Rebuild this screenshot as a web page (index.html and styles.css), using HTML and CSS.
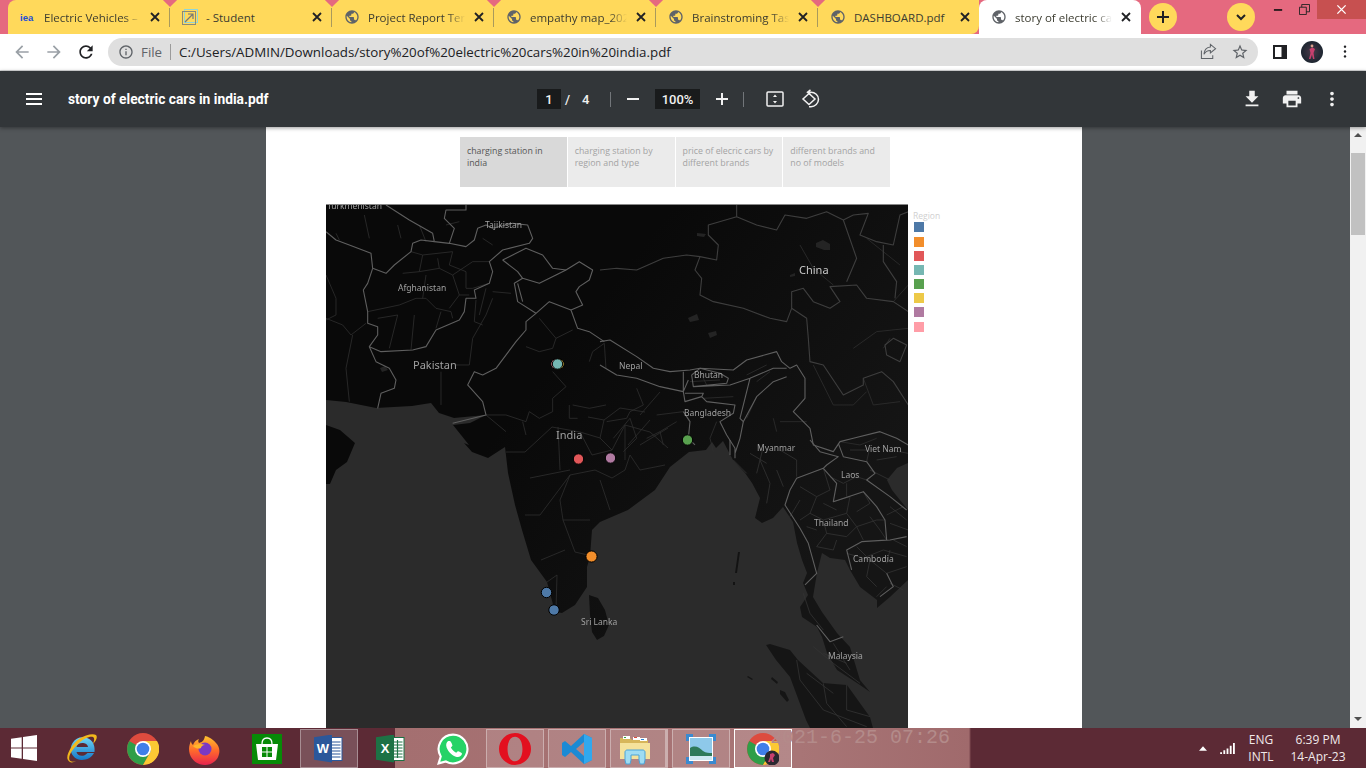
FILE: index.html
```html
<!DOCTYPE html>
<html lang="en">
<head>
<meta charset="utf-8">
<title>story of electric cars in india.pdf</title>
<link rel="stylesheet" href="styles.css">
</head>
<body>
<svg class="defs" width="0" height="0" aria-hidden="true">
  <symbol id="globe" viewBox="0 0 24 24"><path d="M12 2C6.48 2 2 6.48 2 12s4.48 10 10 10 10-4.48 10-10S17.52 2 12 2zm-1 17.93c-3.95-.49-7-3.85-7-7.93 0-.62.08-1.21.21-1.79L9 15v1c0 1.1.9 2 2 2v1.93zm6.9-2.54c-.26-.81-1-1.39-1.9-1.39h-1v-3c0-.55-.45-1-1-1H8v-2h2c.55 0 1-.45 1-1V7h2c1.1 0 2-.9 2-2v-.41c2.93 1.19 5 4.06 5 7.41 0 2.08-.8 3.97-2.1 5.39z"/></symbol>
  <symbol id="x" viewBox="0 0 12 12"><path d="M2 2l8 8M10 2l-8 8" fill="none" stroke="currentColor" stroke-width="1.8"/></symbol>
</svg>
<div class="app">
  <header class="tabstrip">
    <div class="tabs">
      <div class="tab">
        <svg class="favicon" viewBox="0 0 16 16"><text x="0" y="11.5" class="iea">iea</text></svg>
        <span class="tab-title">Electric Vehicles –</span>
        <svg class="tab-x"><use href="#x"/></svg>
      </div>
      <div class="tab">
        <svg class="favicon" viewBox="0 0 16 16"><rect x="2.5" y=".5" width="13" height="13" fill="none" stroke="#8fd5d8"/><rect x=".5" y="2.5" width="13" height="13" fill="none" stroke="#8a8a7a"/><path d="M3 13l8-8M6 5h5v5" fill="none" stroke="#777" stroke-width="1.2"/></svg>
        <span class="tab-title tab-title-full">- Student</span>
        <svg class="tab-x"><use href="#x"/></svg>
      </div>
      <div class="tab">
        <svg class="favicon globe"><use href="#globe"/></svg>
        <span class="tab-title">Project Report Ten</span>
        <svg class="tab-x"><use href="#x"/></svg>
      </div>
      <div class="tab">
        <svg class="favicon globe"><use href="#globe"/></svg>
        <span class="tab-title">empathy map_202</span>
        <svg class="tab-x"><use href="#x"/></svg>
      </div>
      <div class="tab">
        <svg class="favicon globe"><use href="#globe"/></svg>
        <span class="tab-title">Brainstroming Task</span>
        <svg class="tab-x"><use href="#x"/></svg>
      </div>
      <div class="tab tab-sixth">
        <svg class="favicon globe"><use href="#globe"/></svg>
        <span class="tab-title tab-title-full">DASHBOARD.pdf</span>
        <svg class="tab-x"><use href="#x"/></svg>
      </div>
      <div class="tab tab-active">
        <svg class="favicon globe"><use href="#globe"/></svg>
        <span class="tab-title">story of electric ca</span>
        <svg class="tab-x"><use href="#x"/></svg>
      </div>
    </div>
    <button class="round-btn new-tab"><svg viewBox="0 0 16 16"><path d="M8 2v12M2 8h12" stroke="#202124" stroke-width="2"/></svg></button>
    <button class="round-btn tab-search"><svg viewBox="0 0 16 16"><path d="M4 6l4 4 4-4" fill="none" stroke="#202124" stroke-width="2"/></svg></button>
    <div class="win-controls">
      <div class="win-btn"><svg viewBox="0 0 12 12"><path d="M1 6.500h9" stroke="#111" stroke-width="1.800"/></svg></div>
      <div class="win-btn"><svg viewBox="0 0 12 12"><path d="M.5 3.500h7.500v8H.5zM3 3.500V.5h8.500v8H8" fill="none" stroke="#222"/></svg></div>
      <div class="win-btn win-close"><svg viewBox="0 0 12 12"><path d="M1.500 1.500l9 9M10.500 1.500l-9 9" stroke="#fff" stroke-width="1.500"/></svg></div>
    </div>
  </header>

  <nav class="toolbar">
    <svg class="nav-icon dim" viewBox="0 0 24 24"><path d="M20 11H7.830l5.590-5.590L12 4l-8 8 8 8 1.410-1.410L7.830 13H20v-2z"/></svg>
    <svg class="nav-icon dim" viewBox="0 0 24 24"><path d="M12 4l-1.410 1.410L16.170 11H4v2h12.170l-5.580 5.590L12 20l8-8z"/></svg>
    <svg class="nav-icon" viewBox="0 0 24 24"><path d="M17.650 6.350C16.200 4.900 14.210 4 12 4c-4.420 0-7.990 3.580-7.990 8s3.570 8 7.990 8c3.730 0 6.840-2.550 7.730-6h-2.080c-.82 2.330-3.040 4-5.650 4-3.310 0-6-2.690-6-6s2.690-6 6-6c1.660 0 3.140.69 4.220 1.780L13 11h7V4l-2.350 2.350z"/></svg>
    <div class="omnibox">
      <svg class="info" viewBox="0 0 24 24"><path d="M11 7h2v2h-2zm0 4h2v6h-2zm1-9C6.480 2 2 6.480 2 12s4.480 10 10 10 10-4.480 10-10S17.520 2 12 2zm0 18c-4.410 0-8-3.590-8-8s3.590-8 8-8 8 3.590 8 8-3.590 8-8 8z"/></svg>
      <span class="scheme">File</span>
      <span class="omni-sep"></span>
      <span class="url">C:/Users/ADMIN/Downloads/story%20of%20electric%20cars%20in%20india.pdf</span>
      <svg class="omni-icon share" viewBox="0 0 18 18"><path d="M11 1.500l5.500 4.500-5.500 4.500V8C7.500 8 5.500 9.500 4.200 12 4.500 7.500 7 4.500 11 4.200zM1.500 8v8.500h12V13" fill="none" stroke="#5f6368" stroke-width="1.100"/></svg>
      <svg class="omni-icon star" viewBox="0 0 24 24"><path d="M22 9.240l-7.190-.62L12 2 9.190 8.630 2 9.240l5.460 4.730L5.820 21 12 17.270 18.180 21l-1.630-7.030L22 9.240zM12 15.400l-3.760 2.270 1-4.280-3.320-2.880 4.380-.38L12 6.100l1.710 4.040 4.380.38-3.320 2.880 1 4.280L12 15.400z"/></svg>
    </div>
    <svg class="side-panel" viewBox="0 0 14 14"><path d="M0 0h14v14H0zM2 2v10h6.500V2z" fill="#202124" fill-rule="evenodd"/></svg>
    <svg class="avatar" viewBox="0 0 22 22"><defs><radialGradient id="av"><stop offset="0" stop-color="#4a3a4a"/><stop offset="1" stop-color="#1c2530"/></radialGradient></defs><circle cx="11" cy="11" r="11" fill="url(#av)"/><path d="M8.500 8l3-1.500 2.500 1.500-1.500 4 1 6h-1.500l-1-4.500-1.500 4.500H8l1.500-6z" fill="#c8406e"/><circle cx="11" cy="5" r="1.400" fill="#d9a28c"/></svg>
    <svg class="kebab" viewBox="0 0 4 16"><circle cx="2" cy="2" r="1.500"/><circle cx="2" cy="8" r="1.500"/><circle cx="2" cy="14" r="1.500"/></svg>
  </nav>

  <section class="pdf-toolbar">
    <div class="pdf-left">
      <svg class="menu-icon" viewBox="0 0 16 12"><path d="M0 1h16M0 6h16M0 11h16" stroke="#fff" stroke-width="2"/></svg>
      <span class="pdf-title">story of electric cars in india.pdf</span>
    </div>
    <div class="pdf-center">
      <span class="page-box">1</span>
      <span class="page-slash">/</span>
      <span class="page-count">4</span>
      <span class="pdf-sep"></span>
      <svg class="zoom-icon" viewBox="0 0 14 14"><path d="M1 7h12" stroke="#f1f1f1" stroke-width="2"/></svg>
      <span class="zoom-box">100%</span>
      <svg class="zoom-icon" viewBox="0 0 14 14"><path d="M1 7h12M7 1v12" stroke="#f1f1f1" stroke-width="2"/></svg>
      <span class="pdf-sep pdf-sep-b"></span>
      <svg class="fit-icon" viewBox="0 0 18 16"><rect x="1" y="1" width="16" height="14" rx="1" fill="none" stroke="#f1f1f1" stroke-width="1.500"/><path d="M9 3.500l2 2.500H7zM9 12.500l2-2.500H7z" fill="#f1f1f1"/></svg>
      <svg class="rotate-icon" viewBox="0 0 20 20"><path d="M8 4.500l-6 5.500 6 5.500 6-5.500z" fill="none" stroke="#f1f1f1" stroke-width="1.500"/><path d="M9.500 0.800l-3 2.400 3 2.400M7 3.200h3c4 0 7.500 3 7.500 7s-3.500 7.500-7.500 7.500H8" fill="none" stroke="#f1f1f1" stroke-width="1.500"/></svg>
    </div>
    <div class="pdf-right">
      <svg class="pdf-action" viewBox="0 0 24 24"><path d="M19 9h-4V3H9v6H5l7 7 7-7zM5 18v2h14v-2H5z"/></svg>
      <svg class="pdf-action" viewBox="0 0 24 24"><path d="M19 8H5c-1.660 0-3 1.340-3 3v6h4v4h12v-4h4v-6c0-1.660-1.340-3-3-3zm-3 11H8v-5h8v5zm3-7c-.55 0-1-.45-1-1s.45-1 1-1 1 .45 1 1-.45 1-1 1zm-1-9H6v4h12V3z"/></svg>
      <svg class="pdf-action" viewBox="0 0 24 24"><path d="M12 8c1.100 0 2-.9 2-2s-.9-2-2-2-2 .9-2 2 .9 2 2 2zm0 2c-1.100 0-2 .9-2 2s.9 2 2 2 2-.9 2-2-.9-2-2-2zm0 6c-1.100 0-2 .9-2 2s.9 2 2 2 2-.9 2-2-.9-2-2-2z"/></svg>
    </div>
  </section>

  <main class="viewer">
    <div class="viewer-scroll">
      <article class="page">
        <div class="story-tabs">
          <div class="story-tab story-tab-active">charging station in india</div>
          <div class="story-tab">charging station by region and type</div>
          <div class="story-tab">price of elecric cars by different brands</div>
          <div class="story-tab">different brands and no of models</div>
        </div>
        <div class="story-body">
          <svg class="map" viewBox="326 205 582 523" preserveAspectRatio="none">
            <defs>
              <linearGradient id="landglow" gradientUnits="userSpaceOnUse" x1="600" y1="300" x2="860" y2="500"><stop offset="0" stop-color="#090909"/><stop offset="1" stop-color="#151515"/></linearGradient>
            </defs>
            <rect class="water" x="326" y="205" width="582" height="523"/>
            <g class="land">
              <path d="M326 205H908V463L897 468 887 480 892 490 908 510V580L890 597 877 608 877 600 860 587 850 570 845 560 830 558 822 553 817 573 813 597 822 612 837 633 850 647 860 680 870 692 857 683 837 670 827 653 822 637 817 627 802 617 800 607 808 595 803 583 807 573 802 560 797 543 793 522 783 507 773 518 762 523 755 518 760 498 752 483 745 473 733 460 723 441 716 448 712 442 706 450 689 452 670 467 655 490 628 510 600 522 592 530 590 557 587 567 587 587 575 605 562 613 555 612 547 582 531 560 522 530 515 505 508 473 505 447 488 458 472 452 464 443 469 445 461 435 453 425 470 423 486 415 454 418 439 413 431 403 412 406 376 408 346 402 326 400Z"/>
              <path d="M326 425L340 430 355 443 347 462 336 470 330 484 326 484Z"/>
              <path d="M589 595L598 598 605 610 609 625 604 636 597 640 592 632 590 615Z"/>
              <path d="M766 645L770 644 790 650 798 660 823 683 847 685 870 717 873 728H810L806 720 790 677 776 660Z"/>
              <path d="M738 552L740 552 737 573 735 573ZM733 582h2v3h-2zM748 676l5 3-1 1-5-3zM772 677l6 5-1 2-6-5zM780 690l5 2 4 8-2 2-7-8z"/>
            </g>
            <g class="lakes">
              <path d="M816 243l7-3 7 4 0 6-6 0-8-3zM688 318l9-4 2 6-9 2zM708 333l8-2 1 4-7 3zM790 275l5-2 0 3-5 1zM697 233l9 1-2 3-7-1zM380 368l5-2 3 4-6 2z"/>
            </g>
            <g class="minor" transform="translate(326 205) scale(.3333)">
              <path d="M255 140L290 150 380 140 370 180 420 200 420 250 440 250M290 150L280 200 340 190 380 210 400 270 430 270M300 210L290 280M340 190L335 160M380 210L440 170 490 170M230 205L280 200M490 235L440 250M400 270L370 310M450 285L445 350 470 360M480 250L460 330M500 260L555 265"/>
              <path d="M125 320L220 300 270 280 300 280 330 310 375 320 380 340M155 340L215 330 190 430M265 330L255 435M345 320L330 370M345 500L345 600M390 480L430 480 440 400 480 330 500 280M0 340L50 360 75 390 120 355M80 390L60 490 70 590M0 210L30 280 30 330 0 345M115 30L130 100M30 85L40 105M225 100L215 60M360 60L400 50M500 120L470 100M300 110L280 60"/>
              <path d="M600 425L640 440 680 430 690 400 640 340M690 400L740 375M680 500L720 545 680 580 680 620 640 640 610 620 600 650 540 630 480 630M790 470L800 440 835 415 840 490M740 600L790 610 840 600M730 600L730 640 755 640M600 690L590 650M480 630L540 680"/>
            </g>
            <g class="minor">
              <path d="M588 417L604 420 620 408 645 412M604 420L600 438 580 432 552 427 525 452 506 452M580 432L592 455 612 450 625 425 650 432 668 448M600 438L612 450M612 478L625 470 630 455 640 470 665 465M612 478L595 470 570 475 540 515 525 515M570 475L560 500 563 520 590 520M610 510L600 480M563 520L575 552 592 556M541 560L565 550M547 582L557 575 556 610M640 415L660 392M668 428L640 445M625 425L625 460M530 478L570 470M558 427L560 470M628 445L650 420"/>
            </g>
            <g class="minor" transform="translate(600 205) scale(.3333)">
              <path d="M110 550L130 600 90 620 80 640 20 650M170 630L250 620M180 680L230 650M40 700L90 640 110 700 70 740M140 700L180 680 190 720M310 580L400 575M350 650L330 700 340 740M440 640L470 575M520 640L530 680M540 650L620 650M640 480L700 600 760 600 800 560M790 520L820 600 900 590M720 710L780 720 830 700M850 430L870 400M760 430L830 380 925 370M600 120L640 190 700 240M800 100L900 180M880 290L925 240"/>
              <path d="M440 510L500 480M470 530L510 500M270 530L360 525M300 500L320 540"/>
            </g>
            <g class="minor mesh" transform="translate(690 440) scale(.3333)">
              <path d="M330 140L380 170 360 220 330 240M380 170L420 150 400 85M360 220L400 240 410 280 380 320M400 240L470 220 500 260 470 290 410 280M470 220L480 170 430 185M500 260L560 240 585 240M500 260L520 300M380 320L430 330 440 300M330 180L300 230M350 260L380 270M400 190L440 210M420 110L460 130 500 110 530 120M470 130L470 170M520 155L540 190M540 190L500 215M540 230L570 270 590 300M470 340L540 360 590 400M500 320L530 350 580 330 650 350M540 360L530 410 560 440M590 400L650 380M600 330L590 370M610 300L650 320M600 250L655 270M600 200L650 240M590 225L640 200M540 90L600 120M560 60L620 50M480 30L530 30M530 65L540 20M600 30L655 40M640 450L600 430M560 470L590 440M210 60L240 130 230 190M130 60L170 100M260 90L280 140M270 30L320 60 320 110M220 20L200 100M180 40L230 70"/>
              <path d="M340 460L360 520 400 570M370 620L430 670 510 730M400 640L470 670M430 610L480 690M320 660L330 720 400 810 530 860M400 730L410 790 470 860M350 700L430 760M470 735L470 810 540 830"/>
            </g>
            <g class="major" transform="translate(326 205) scale(.3333)">
              <path d="M180 0L250 45 320 85 325 110 285 105 260 115 255 140 205 180 180 205 140 190 135 145 70 120 30 105 0 80"/>
              <path d="M140 190L125 235 112 255 125 320 125 355 155 365 155 390 130 425 150 470 190 490 210 525 205 550 165 565 155 610"/>
              <path d="M130 425L165 440 260 435 300 425 330 375 365 360 400 345 415 320 420 280 450 280 445 255 490 235 500 200 490 170 530 135 610 115 620 100 605 60 560 55 500 70 480 60 455 70 445 105 420 125 370 115 385 70 355 40 360 15 420 15 420 0M325 110L370 115"/>
              <path d="M530 165L600 130 650 150 680 190 720 195 760 170 800 195 790 225 760 245 750 260 770 300 735 315 755 370 790 380 835 410"/>
              <path d="M530 165L575 200 590 220 565 235 575 290 630 325 670 290 735 315M720 195L690 210 640 235 590 220M575 235L590 290"/>
              <path d="M630 325L600 350 600 375 570 410 510 490 470 510 445 500 425 540 470 590 480 630 380 655"/>
            </g>
            <g class="major" transform="translate(600 205) scale(.3333)">
              <path d="M0 410L30 405 110 455 160 490 210 500 270 495 300 490 400 495 440 465 530 440 545 470 570 490 590 480 615 520 615 580 580 620 630 670 640 720 700 740 720 710 760 700 840 680 890 700 925 720"/>
              <path d="M0 480L50 510 110 520 180 545 250 560 250 500M250 560L265 525M275 510L300 490 360 505 385 520 380 535 280 545 275 510M280 545L390 540 450 520 520 490 560 490M450 520L420 640 430 650 470 575 520 530 560 515"/>
              <path d="M250 560L255 590 305 575 310 565 255 565M305 575L320 590 405 600 400 625 360 650 380 690 405 730 405 760M250 620L270 650 265 700 285 720M430 650L420 700 405 745"/>
            </g>
            <g class="major major-dim" transform="translate(600 205) scale(.3333)">
              <path d="M0 195L50 190 110 195 190 160 260 150 300 155 350 165 355 120 325 90 325 60 410 35 470 60 530 75 555 30 620 40 680 20 730 45 760 30 805 25 780 90 830 110 880 120 900 30 925 20M410 0L410 35"/>
              <path d="M300 155L285 195 305 220 300 270 340 290 430 310 510 340 560 350 575 310 620 340 625 400 630 470 670 480 730 570 790 540 790 520 845 500 880 530 925 600"/>
              <path d="M575 310L575 260 610 250 640 290 690 310 720 290 690 245 770 240 800 280 880 290 925 320M730 45L770 160 740 230M850 120L850 170 890 230 885 280M855 420L880 400 920 420 900 470 860 450Z"/>
            </g>
            <g class="major" transform="translate(690 440) scale(.3333)">
              <path d="M360 0L390 35 445 50 410 75 400 85 320 115 300 150 285 195 330 265 355 310 380 400 345 435"/>
              <path d="M445 10L460 50 530 65 555 100 530 120 600 170 650 210M400 85L440 130 430 185 520 155 560 200 585 240 590 300 515 305 470 330 485 390M515 305L600 300 650 290M590 400L610 440 570 470M380 555L420 605 460 590M120 0L120 45"/>
            </g>
            <g class="labels">
              <text x="327" y="209" class="lb-s">Turkmenistan</text>
              <text x="485" y="228" class="lb-s">Tajikistan</text>
              <text x="398" y="291" class="lb-s">Afghanistan</text>
              <text x="799" y="274" class="lb-l">China</text>
              <text x="413" y="369" class="lb-m">Pakistan</text>
              <text x="619" y="369" class="lb-s">Nepal</text>
              <text x="694" y="378" class="lb-s">Bhutan</text>
              <text x="684" y="416" class="lb-s">Bangladesh</text>
              <text x="556" y="439" class="lb-m">India</text>
              <text x="757" y="451" class="lb-s">Myanmar</text>
              <text x="865" y="452" class="lb-s">Viet Nam</text>
              <text x="841" y="478" class="lb-s">Laos</text>
              <text x="814" y="526" class="lb-s">Thailand</text>
              <text x="853" y="562" class="lb-s">Cambodia</text>
              <text x="581" y="625" class="lb-s">Sri Lanka</text>
              <text x="828" y="659" class="lb-s">Malaysia</text>
            </g>
            <g class="points">
              <circle cx="556" cy="364" r="5.200" fill="#ff9da7"/>
              <circle cx="559" cy="364" r="5.200" fill="#edc948"/>
              <circle cx="557.500" cy="364" r="5.200" fill="#76b7b2"/>
              <circle cx="578.500" cy="459" r="5.200" fill="#e15759"/>
              <circle cx="610.500" cy="458" r="5.200" fill="#b07aa1"/>
              <circle cx="687.500" cy="440" r="5.200" fill="#59a14f"/>
              <circle cx="591.500" cy="556.500" r="5.600" fill="#f28e2b"/>
              <circle cx="546.500" cy="592.500" r="5.200" fill="#4e79a7"/>
              <circle cx="554" cy="610" r="5.200" fill="#4e79a7"/>
            </g>
          </svg>
          <aside class="legend">
            <div class="legend-title">Region</div>
            <span class="swatch sw-blue"></span>
            <span class="swatch sw-orange"></span>
            <span class="swatch sw-red"></span>
            <span class="swatch sw-teal"></span>
            <span class="swatch sw-green"></span>
            <span class="swatch sw-yellow"></span>
            <span class="swatch sw-purple"></span>
            <span class="swatch sw-pink"></span>
          </aside>
        </div>
      </article>
    </div>
    <div class="scrollbar">
      <svg class="sb-arrow" viewBox="0 0 8 4"><path d="M0 4l4-4 4 4z"/></svg>
      <div class="sb-thumb"></div>
      <svg class="sb-arrow sb-down" viewBox="0 0 8 4"><path d="M0 0l4 4 4-4z"/></svg>
    </div>
  </main>

  <footer class="taskbar">
    <div class="tb-start"><svg viewBox="0 0 26 26"><path d="M0 3.700L10.700 2.200V12.400H0zM12 2L26 0V12.400H12zM0 13.600H10.700V23.800L0 22.300zM12 13.600H26V26L12 24z" fill="#fff"/></svg></div>
    <div class="tb-item">
      <svg class="tb-icon" viewBox="0 0 32 32"><defs><linearGradient id="ie" x1="0" y1="0" x2="0" y2="1"><stop offset="0" stop-color="#6fd5f5"/><stop offset="1" stop-color="#1577c9"/></linearGradient></defs><path d="M29.500 19H11.500c.5 3.500 6.500 6 11 1H29c-3 6-11 8.500-17 6-6-3-8-10-4.500-16C11 4 19 2.500 25 6.500c4 3 5 8 4.500 12.500zM11.500 14h11.500c-.5-5-10.500-5.500-11.500 0z" fill="url(#ie)"/><path d="M3 27C0 23 7 11 14 6c6-4 14-6 17-4 2 2 0 6-3 9 1-3 2-6 0-7-3-1-9 1-15 7S3 23 4.500 27c1 2 4 2 7 1-4 2-7 2-8.500-1z" fill="#f2b81c"/></svg>
    </div>
    <div class="tb-item">
      <svg class="tb-icon" viewBox="0 0 32 32"><circle cx="16" cy="16" r="16" fill="#dd4b3e"/><path d="M16 16L2.200 8A16 16 0 0 0 16 32l8-14z" fill="#2f9e48"/><path d="M16 8h14a16 16 0 0 1-14 24l8-14z" fill="#fcc934"/><circle cx="16" cy="16" r="8" fill="#fff"/><circle cx="16" cy="16" r="6.300" fill="#3f7fe8"/></svg>
    </div>
    <div class="tb-item">
      <svg class="tb-icon" viewBox="0 0 32 32"><defs><linearGradient id="ff" x1="0" y1="0" x2="0" y2="1"><stop offset="0" stop-color="#ffc32e"/><stop offset=".5" stop-color="#ff6a2b"/><stop offset="1" stop-color="#e8234f"/></linearGradient></defs><path d="M16 32C7 32 0 25 0 16c0-3 1-6 2-8 0 2 1 3 2 4 1-3 3-5 6-6-1 1-1 3 0 4 3-1 5-2 6-7 2 0 8 3 11 7 3 3 4 7 3 11-1 6-7 11-14 11z" fill="url(#ff)"/><circle cx="16" cy="16" r="6.500" fill="#7a39c4"/><path d="M4 13c3-2 8-3 12-1-3 0-4 2-4 3-2 1-5 1-8-2z" fill="#ffb62b"/></svg>
    </div>
    <div class="tb-item">
      <svg class="tb-icon store" viewBox="0 0 30 30"><rect width="30" height="30" fill="#078a07"/><path d="M10 10c0-4 2-6 5-6s5 2 5 6" fill="none" stroke="#fff" stroke-width="1.300"/><path d="M4 10h22l-2 16H6z" fill="#fff"/><path d="M10 13h4.500v4.500H10zM15.500 13H20v4.500h-4.500zM10 18.500h4.500V23H10zM15.500 18.500H20V23h-4.500z" fill="#078a07"/></svg>
    </div>
    <div class="tb-item tb-word">
      <div class="office-icon">
        <svg class="office-doc" viewBox="0 0 14 24"><rect x=".5" y=".5" width="13" height="23" fill="#fff" stroke="#2b579a"/><path d="M3 5h9M3 8h9M3 11h9M3 14h9M3 17h9M3 20h9" stroke="#2b579a" stroke-width="1.200"/></svg>
        <span class="office-letter word-letter">W</span>
      </div>
    </div>
    <div class="tb-item">
      <div class="office-icon">
        <svg class="office-doc" viewBox="0 0 14 24"><rect x=".5" y=".5" width="13" height="23" fill="#fff" stroke="#1d7245"/><path d="M3 5h9M3 8h9M3 11h9M3 14h9M3 17h9M3 20h9M7 3v18" stroke="#1d7245" stroke-width="1.200"/></svg>
        <span class="office-letter excel-letter">X</span>
      </div>
    </div>
    <div class="tb-item">
      <svg class="tb-icon" viewBox="0 0 30 30"><path d="M15 1.500A13.500 13.500 0 0 0 3.500 22L1.500 28.500 8.300 26.700A13.500 13.500 0 1 0 15 1.500z" fill="#25d366" stroke="#fff" stroke-width="2"/><path d="M10.500 7.500c-1.500 1-2.500 3-1.500 6 1.500 4 5.500 8 9.500 9 2.500.5 4.500-1 5-3 0-1-3-2.500-4-2.500l-1.500 1.500c-2-1-4-3-5-5l1.500-1.500c0-1-1.500-4.500-2.500-4.500z" fill="#fff"/></svg>
    </div>
    <div class="tb-item tb-open">
      <svg class="tb-icon" viewBox="0 0 30 30"><path d="M15 0a15 15 0 1 0 0 30 15 15 0 0 0 0-30zm0 3.500c4.500 0 7 5 7 11.500s-2.500 11.500-7 11.500S8 21.500 8 15 10.500 3.500 15 3.500z" fill="#e3101f" fill-rule="evenodd"/></svg>
    </div>
    <div class="tb-item tb-open">
      <svg class="tb-icon" viewBox="0 0 32 32"><path d="M23 1l8 4v22l-8 4-13-12-6 5-3-2v-12l3-2 6 5zM23 9l-8 7 8 7z" fill="#1a8ad4" fill-rule="evenodd"/><path d="M23 1l8 4v22l-8 4z" fill="#31a8ee"/></svg>
    </div>
    <div class="tb-item tb-open tb-stack">
      <svg class="tb-icon folder" viewBox="0 0 32 32"><path d="M1 5h10l2 2h16v4H1z" fill="#d7b65a"/><path d="M4 3h7v3H4zM14 4h7v3h-7zM21 5h7v3h-7z" fill="#fff"/><rect x="5" y="4" width="2" height="1" fill="#35a33d"/><rect x="15" y="4" width="3" height="1" fill="#e04a3c"/><rect x="22" y="6" width="3" height="1" fill="#2a86d8"/><path d="M1 10h30v16H1z" fill="#f5e29b"/><path d="M6 27V19c0-1 1-2 2-2h16c1 0 2 1 2 2v8l-1 4h-4l-1-4v-5H12v5l-1 4H7z" fill="#9fdcf2" stroke="#4aa3d8"/></svg>
    </div>
    <div class="tb-item tb-open">
      <svg class="tb-icon" viewBox="0 0 32 32"><path d="M1 1h7v3H4v4H1zM24 1h7v7h-3V4h-4zM1 24h3v4h4v3H1zM28 24h3v7h-7v-3h4z" fill="#3a8ad0"/><rect x="4" y="4" width="24" height="24" fill="#fff"/><rect x="5" y="5" width="22" height="22" fill="#8ec9ea"/><path d="M5 15c5-3 9-1 13 3 3 2 6 2 9 2v7H5z" fill="#2f7a5a"/><path d="M5 23h22v4H5z" fill="#cfe8f2"/></svg>
    </div>
    <div class="tb-item tb-open tb-active">
      <svg class="tb-icon" viewBox="0 0 32 32"><circle cx="16" cy="16" r="16" fill="#dd4b3e"/><path d="M16 16L2.200 8A16 16 0 0 0 16 32l8-14z" fill="#2f9e48"/><path d="M16 8h14a16 16 0 0 1-14 24l8-14z" fill="#fcc934"/><circle cx="16" cy="16" r="8" fill="#fff"/><circle cx="16" cy="16" r="6.300" fill="#3f7fe8"/><circle cx="25" cy="25" r="7.500" fill="#2a2830"/><path d="M23 21l3-1 2 2-2 3 1 4h-2l-1-3-1 3h-2l2-5z" fill="#c8406e"/></svg>
    </div>
    <span class="wall-stamp">2021-6-25 07:26</span>
    <div class="tray">
      <svg class="tray-up" viewBox="0 0 9 5"><path d="M0 5l4.500-5 4.500 5z" fill="#fff"/></svg>
      <svg class="tray-signal" viewBox="0 0 16 12"><path d="M0 10h2v2H0zM3.500 8h2v4h-2zM7 6h2v6H7zM10.500 3h2v9h-2zM14 0h2v12h-2z" fill="#fff"/></svg>
      <div class="tray-text tray-lang"><span>ENG</span><span>INTL</span></div>
      <div class="tray-text tray-clock"><span>6:39 PM</span><span>14-Apr-23</span></div>
    </div>
  </footer>
</div>
</body>
</html>
```

FILE: styles.css
```css
* { box-sizing: border-box; }
html, body { margin: 0; padding: 0; height: 100%; overflow: hidden; }
body { font-family: "Open Sans", "Noto Sans", sans-serif; }
.defs { position: absolute; }
.app { width: 1366px; height: 768px; display: flex; flex-direction: column; overflow: hidden; }

/* tab strip */
.tabstrip { height: 34px; background: #e5697f; display: flex; align-items: flex-start; flex: none; }
.tabs { display: flex; margin-left: 8px; width: 1133px; height: 34px; flex: none; }
.tab { width: 162px; height: 34px; flex: none; background: #ffd95b; display: flex; align-items: center; padding-left: 12px; position: relative; font-size: 11.5px; color: #3c3c30; }
.tab:first-child { border-radius: 8px 0 0 0; }
.tab::after { content: ""; position: absolute; right: 0; top: 8px; height: 19px; width: 1px; background: #a99a5c; }
.tab::before { content: ""; position: absolute; right: -5px; top: -5px; width: 10px; height: 10px; background: #e5697f; transform: rotate(45deg); z-index: 1; }
.tab-sixth { width: 161px; border-radius: 0 0 8px 0; }
.tab-sixth::after, .tab-sixth::before, .tab-active::after, .tab-active::before { display: none; }
.tab-active { background: #fff; border-radius: 8px 8px 0 0; }
.favicon { width: 16px; height: 16px; flex: none; }
.globe { fill: #5f6368; }
.iea { font: bold 9.5px "Liberation Sans", sans-serif; fill: #1b4fd8; }
.tab-title { margin-left: 8px; width: 97px; flex: none; white-space: nowrap; -webkit-mask-image: linear-gradient(to right, #000 82%, transparent 100%); mask-image: linear-gradient(to right, #000 82%, transparent 100%); }
.tab-title-full { -webkit-mask-image: none; mask-image: none; }
.tab-x { width: 12px; height: 12px; margin-left: 8px; flex: none; color: #202124; }
.round-btn { border: 0; padding: 0; border-radius: 50%; background: #ffd95b; display: flex; align-items: center; justify-content: center; width: 28px; height: 28px; margin-top: 3px; flex: none; }
.round-btn svg { width: 16px; height: 16px; }
.new-tab { margin-left: 8px; }
.tab-search { margin-left: 50px; }
.win-controls { display: flex; margin-left: 10px; }
.win-btn { width: 26px; height: 19px; display: flex; align-items: center; justify-content: center; }
.win-btn svg { width: 11px; height: 11px; }
.win-close { width: 49px; background: #c75050; }

/* browser toolbar */
.toolbar { height: 37px; flex: none; background: #fff; display: flex; align-items: center; padding: 0 0 1px 12px; border-bottom: 1px solid #d9dadb; }
.nav-icon { width: 20px; height: 20px; margin-right: 12px; fill: #202124; flex: none; }
.dim { fill: #9aa0a6; }
.omnibox { width: 1150px; height: 28px; background: #dfdfdf; border-radius: 14px; display: flex; align-items: center; padding-left: 10px; font-size: 13.33px; color: #202124; flex: none; }
.info { width: 16px; height: 16px; fill: #5f6368; flex: none; margin-right: 7px; }
.scheme { color: #5f6368; }
.omni-sep { width: 1px; height: 16px; background: #9b9b9b; margin: 0 8px; }
.url { white-space: nowrap; }
.omni-icon { width: 17px; height: 17px; flex: none; }
.share { margin-left: auto; }
.star { width: 18px; height: 18px; margin: 0 9px 0 14px; fill: #5f6368; }
.side-panel { width: 14px; height: 14px; margin-left: 15px; flex: none; }
.avatar { width: 22px; height: 22px; margin-left: 14px; flex: none; }
.kebab { width: 4px; height: 13px; margin-left: 20px; fill: #202124; flex: none; }

/* pdf toolbar */
.pdf-toolbar { height: 56px; flex: none; background: #323639; color: #f1f1f1; display: flex; align-items: center; padding-left: 26px; position: relative; z-index: 2; box-shadow: 0 1px 4px rgba(0,0,0,.4); }
.pdf-left { width: 511px; display: flex; align-items: center; flex: none; }
.menu-icon { width: 16px; height: 12px; flex: none; }
.pdf-title { margin-left: 26px; font: 700 13.8px Roboto, sans-serif; color: #fff; white-space: nowrap; }
.pdf-center { display: flex; align-items: center; font: 500 13px Roboto, sans-serif; flex: none; }
.page-box { width: 24px; height: 20px; background: #191b1c; display: flex; align-items: center; justify-content: center; }
.page-slash { margin-left: 4px; width: 17px; }
.page-count { width: 10px; }
.pdf-sep { width: 1px; height: 15px; background: #72767a; margin-left: 18px; }
.zoom-icon { width: 14px; height: 14px; flex: none; }
.pdf-sep + .zoom-icon { margin-left: 15px; }
.zoom-box { width: 45px; height: 20px; margin: 0 15px; background: #191b1c; display: flex; align-items: center; justify-content: center; }
.pdf-sep-b { margin-left: 14px; }
.fit-icon { width: 18px; height: 16px; margin-left: 22px; flex: none; }
.rotate-icon { width: 20px; height: 20px; margin-left: 17px; flex: none; }
.pdf-right { margin-left: auto; display: flex; align-items: center; gap: 18px; padding-right: 23px; }
.pdf-action { width: 22px; height: 22px; fill: #f1f1f1; flex: none; }

/* viewer */
.viewer { flex: 1; min-height: 0; display: flex; background: #525659; overflow: hidden; }
.viewer-scroll { flex: 1; display: flex; justify-content: center; overflow: hidden; }
.page { width: 816px; height: 601px; background: #fff; flex: none; padding-top: 10px; margin-right: 2px; display: flex; flex-direction: column; align-items: flex-start; }
.story-tabs { display: flex; gap: 1px; margin-left: 194px; }
.story-tab { width: 106.750px; height: 50px; background: #ebebeb; padding: 8px 8px 0 7px; font: 8.800px/12px "Open Sans", "Noto Sans", sans-serif; color: #a3a3a3; }
.story-tab-active { background: #d9d9d9; color: #555; }
.story-body { display: flex; margin: 17px 0 0 60px; gap: 5px; }
.map { width: 582px; height: 524px; display: block; flex: none; border-top: 1px solid #888; filter: blur(.35px); }
.water { fill: #2b2b2b; }
.land { fill: url(#landglow); }
.lakes { fill: #242424; }
.minor path { fill: none; stroke: #2f2f2f; stroke-width: .8; vector-effect: non-scaling-stroke; stroke-linejoin: round; }
.mesh path { stroke: #333; }
.major path { fill: none; stroke: #5f5f5f; stroke-width: 1.100; vector-effect: non-scaling-stroke; stroke-linejoin: round; }
.major-dim path { stroke: #3e3e3e; }
.labels text { font-family: "Noto Sans", "Open Sans", sans-serif; fill: #a0a0a0; }
.lb-s { font-size: 8.500px; }
.lb-m { font-size: 11px; }
.lb-l { font-size: 11px; }
.labels .lb-l { fill: #c8c8c8; }
.points circle { stroke: #000; stroke-width: 1; }
.legend { width: 30px; padding-top: 6px; display: flex; flex-direction: column; }
.legend-title { font-size: 8.500px; line-height: 11px; color: #d0d0d0; margin-bottom: 1px; }
.swatch { width: 10px; height: 10px; margin: 0 0 4.100px 1px; flex: none; }
.sw-blue { background: #4e79a7; margin-bottom: 5px; }
.sw-orange { background: #f28e2b; }
.sw-red { background: #e15759; }
.sw-teal { background: #76b7b2; }
.sw-green { background: #59a14f; }
.sw-yellow { background: #edc948; }
.sw-purple { background: #b07aa1; }
.sw-pink { background: #ff9da7; }
.scrollbar { width: 16px; flex: none; background: #f1f1f1; display: flex; flex-direction: column; align-items: center; padding-top: 6px; }
.sb-arrow { width: 8px; height: 4px; fill: #505050; flex: none; }
.sb-thumb { width: 14px; height: 82px; background: #c1c1c1; margin-top: 16px; }
.sb-down { margin-top: auto; margin-bottom: 7px; }

/* taskbar */
.taskbar { height: 40px; flex: none; display: flex; align-items: stretch; gap: 4px; position: relative; color: #fff; background: linear-gradient(to right, #5c2a35 0, #5c2a35 395px, #a46f70 395px, #a87576 800px, #a06a6c 969px, #5c2a35 971px); }
.tb-start { width: 48px; display: flex; align-items: center; justify-content: center; }
.tb-start svg { width: 26px; height: 26px; }
.tb-item { width: 58px; display: flex; align-items: center; justify-content: center; border: 1px solid transparent; margin: 1px 0 0; flex: none; }
.tb-icon { width: 32px; height: 32px; }
.store { width: 30px; height: 30px; }
.tb-word { background: rgba(255,255,255,.18); border-color: rgba(255,255,255,.35); }
.tb-open { background: rgba(255,255,255,.12); border-color: rgba(255,255,255,.35); }
.tb-stack { box-shadow: inset -8px 0 0 -6px rgba(255,255,255,.35); padding-right: 8px; }
.tb-active { border-color: #fff; background: rgba(255,255,255,.14); }
.office-icon { width: 30px; height: 30px; position: relative; }
.office-doc { position: absolute; left: 14px; top: 3px; width: 15px; height: 24px; }
.office-letter { position: absolute; left: 0; top: 1px; width: 18px; height: 28px; display: flex; align-items: center; justify-content: center; font: 700 13px "Liberation Sans", sans-serif; color: #fff; clip-path: polygon(0 10%, 100% 0, 100% 100%, 0 90%); }
.word-letter { background: #2b579a; }
.excel-letter { background: #1d7245; }
.wall-stamp { position: absolute; left: 770px; top: -3px; font: 20px/26px "Liberation Mono", monospace; color: #b38b8a; white-space: nowrap; pointer-events: none; }
.tray { margin-left: auto; display: flex; align-items: center; }
.tray-up { width: 8px; height: 5px; margin-right: 13px; flex: none; }
.tray-signal { width: 15px; height: 11px; margin-right: 8px; flex: none; }
.tray-text { display: flex; flex-direction: column; align-items: center; font-size: 12px; line-height: 17px; color: #f1e9ea; }
.tray-lang { width: 36px; }
.tray-clock { width: 64px; margin: 0 16px 0 7px; }
```
